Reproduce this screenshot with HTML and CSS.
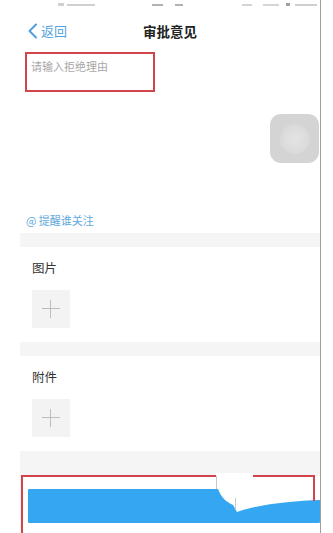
FILE: index.html
```html
<!DOCTYPE html>
<html lang="zh-CN">
<head>
<meta charset="utf-8">
<title>审批意见</title>
<link rel="stylesheet" href="styles.css">
</head>
<body>
<div class="screen">
  <div class="status">
    <svg class="status-marks" width="300" height="10" viewBox="0 0 300 10">
      <rect x="38" y="3" width="6" height="3" fill="#777" opacity=".35"/>
      <rect x="47" y="4" width="28" height="2" fill="#777" opacity=".35"/>
      <rect x="132" y="4" width="11" height="2" fill="#555" opacity=".45"/>
      <rect x="155" y="4" width="8" height="2" fill="#555" opacity=".45"/>
      <rect x="222" y="4" width="10" height="2" fill="#888" opacity=".35"/>
      <rect x="243" y="4" width="16" height="2" fill="#888" opacity=".35"/>
      <rect x="266" y="3" width="4" height="3" fill="#444" opacity=".5"/>
      <rect x="275" y="4" width="22" height="2" fill="#888" opacity=".4"/>
    </svg>
  </div>
  <header class="nav">
    <div class="back">
      <svg class="chev" width="11" height="16" viewBox="0 0 11 16"><polyline points="9,1.5 2.5,8 9,14.5" fill="none" stroke="#4f9fdb" stroke-width="2" stroke-linecap="round" stroke-linejoin="round"/></svg>
      <span>返回</span>
    </div>
    <div class="title">审批意见</div>
    <div></div>
  </header>
  <section class="compose">
    <div class="placeholder">请输入拒绝理由</div>
    <div class="mention">@ 提醒谁关注</div>
    <div class="mark mark-input"></div>
    <div class="float-btn"><div class="float-dot"></div></div>
  </section>
  <div class="band"></div>
  <section class="group">
    <div class="label">图片</div>
    <div class="add"><span class="plus"></span></div>
  </section>
  <div class="band"></div>
  <section class="group">
    <div class="label">附件</div>
    <div class="add"><span class="plus"></span></div>
  </section>
  <footer class="footer">
    <div class="submit-area">
      <div class="submit"></div>
    </div>
    <svg class="glitch" width="300" height="82" viewBox="0 0 300 82">
      <path d="M196,22 L233,22 L233,27 L300,27 L300,49 C272,50 240,53 217,61 L213,54 C206,51 201,46 198,38 L196,38 Z" fill="#fff"/>
      <path d="M196.5,25 L196.5,38" stroke="#c8c8c8" stroke-width="1"/>
      <path d="M215.5,47 L215.5,59" stroke="#c8c8c8" stroke-width="1"/>
      <rect x="1" y="24" width="2" height="58" fill="#d2434c"/>
      <rect x="1" y="24" width="195" height="2" fill="#d2434c"/>
      <rect x="233" y="24" width="62" height="2" fill="#d2434c"/>
      <rect x="293" y="24" width="2" height="26" fill="#d2434c"/>
    </svg>
  </footer>
</div>
</body>
</html>
```

FILE: styles.css
```css
* { box-sizing: border-box; margin: 0; padding: 0; }
html, body { width: 333px; height: 533px; overflow: hidden; background: #fff; }
body { font-family: "Noto Sans CJK SC", "Noto Sans", sans-serif; color: #333; }

.screen {
  margin-left: 20px;
  width: 301px;
  height: 533px;
  border-right: 1px solid #a0a0a0;
  position: relative;
  display: flex;
  flex-direction: column;
  overflow: hidden;
}

.status { height: 18px; flex: none; }
.status-marks { display: block; }

.nav {
  flex: none;
  height: 26px;
  display: grid;
  grid-template-columns: 1fr auto 1fr;
  align-items: center;
}
.back {
  display: flex;
  align-items: center;
  gap: 3px;
  padding-left: 7px;
  color: #56a4dc;
  font-size: 13px;
  line-height: 16px;
}
.chev { display: block; }
.title {
  font-size: 13.5px;
  font-weight: 700;
  color: #222;
  line-height: 16px;
}

.compose {
  flex: none;
  height: 189px;
  position: relative;
  display: flex;
  flex-direction: column;
  padding: 15px 0 6px 11px;
}
.placeholder {
  font-size: 11px;
  line-height: 14px;
  color: #a8a8a8;
}
.mention {
  margin-top: auto;
  margin-left: -5px;
  font-size: 11px;
  line-height: 14px;
  color: #5ea9dd;
}

.mark { position: absolute; border: 2px solid #d2434c; pointer-events: none; }
.mark-input { left: 5px; top: 8px; width: 130px; height: 40px; }

.float-btn {
  position: absolute;
  left: 250px;
  top: 70px;
  width: 49px;
  height: 49px;
  border-radius: 11px;
  background: #d4d4d4;
  display: flex;
  align-items: center;
  justify-content: center;
}
.float-dot {
  width: 30px;
  height: 30px;
  border-radius: 50%;
  background: radial-gradient(circle, #e4e4e4 0%, #dcdcdc 55%, #d4d4d4 100%);
}

.band { flex: none; height: 14px; background: #f5f5f5; }

.group { flex: none; padding: 13px 12px 14px; }
.label {
  font-size: 12.5px;
  line-height: 16px;
  color: #333;
}
.add {
  margin-top: 14px;
  width: 38px;
  height: 38px;
  background: #f3f3f3;
  position: relative;
}
.plus::before, .plus::after {
  content: "";
  position: absolute;
  background: #bdbdbd;
}
.plus::before { left: 10px; top: 18px; width: 18px; height: 1px; }
.plus::after { left: 18px; top: 10px; width: 1px; height: 18px; }

.footer {
  flex: 1;
  min-height: 0;
  background: #f5f5f5;
  position: relative;
  padding-top: 25px;
}
.submit-area {
  height: 100%;
  background: #fff;
  margin-left: 2px;
  padding: 13px 0 0 6px;
}
.submit {
  height: 34px;
  background: #35a6f2;
  border-radius: 1px;
}
.glitch { position: absolute; left: 0; top: 0; display: block; }
```
